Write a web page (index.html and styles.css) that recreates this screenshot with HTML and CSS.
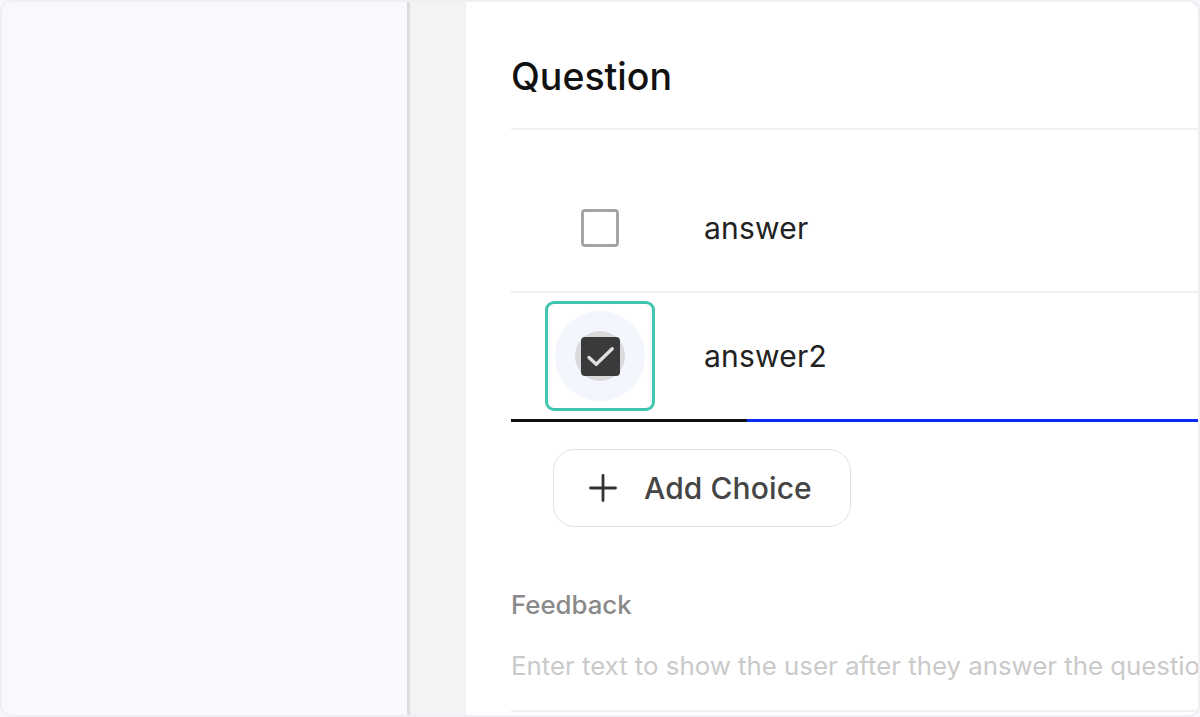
FILE: index.html
```html
<!DOCTYPE html>
<html lang="en">
<head>
<meta charset="utf-8">
<title>Question editor</title>
<link rel="stylesheet" href="styles.css">
</head>
<body>
<div class="frame">
  <aside class="sidebar"></aside>
  <div class="divider"></div>
  <div class="gutter"></div>
  <main class="card">
    <div class="card-inner">
      <h1 class="title">Question</h1>
      <div class="choices">
        <div class="choice">
          <div class="cell">
            <span class="box"></span>
          </div>
          <span class="label">answer</span>
        </div>
        <div class="choice last">
          <div class="cell focus">
            <span class="ripple">
              <span class="halo"></span>
              <span class="box checked">
                <svg viewBox="0 0 39 39" width="39" height="39"><path d="M8 20.5l7.2 6.8 16-15.5" fill="none" stroke="#dedee0" stroke-width="3.4" stroke-linecap="round" stroke-linejoin="round"/></svg>
              </span>
            </span>
          </div>
          <span class="label">answer2</span>
        </div>
        <div class="underline"><span class="ul-dark"></span><span class="ul-blue"></span></div>
      </div>
      <button class="add-btn" type="button">
        <svg class="plus" viewBox="0 0 28 28" width="28" height="28"><path d="M14 1.5v25M1.5 14h25" stroke="#333" stroke-width="2.8" stroke-linecap="round"/></svg>
        <span>Add Choice</span>
      </button>
      <div class="feedback">
        <div class="fb-label">Feedback</div>
        <div class="fb-input">Enter text to show the user after they answer the question</div>
      </div>
    </div>
  </main>
</div>
</body>
</html>
```

FILE: styles.css
```css
* { box-sizing: border-box; }
html, body { margin: 0; padding: 0; }
body {
  width: 1200px;
  height: 717px;
  overflow: hidden;
  background: #f7f7fa;
  font-family: "Inter", "Liberation Sans", sans-serif;
}
.frame {
  display: flex;
  width: 1200px;
  height: 717px;
  border: 2px solid #efeff4;
  border-radius: 12px;
  overflow: hidden;
  background: #ffffff;
}
.sidebar {
  width: 405px;
  flex: none;
  background: #f8f9fd;
}
.divider {
  width: 3px;
  flex: none;
  background: #dcdcdf;
}
.gutter {
  width: 55px;
  flex: none;
  background: #f3f3f3;
}
.card {
  flex: 1;
  min-width: 0;
  background: #ffffff;
  border-left: 1px solid #eeeef3;
  border-top-right-radius: 10px;
  overflow: hidden;
}
.card-inner {
  width: 1100px;
  padding-left: 45px;
}
.title {
  margin: 0;
  padding: 55px 0 31px;
  font-size: 37.5px;
  line-height: 40px;
  font-weight: 500;
  color: #111;
  border-bottom: 2px solid #f0f0f2;
}
.choices {
  padding-top: 35px;
}
.choice {
  display: flex;
  align-items: center;
  padding: 8px 0;
  border-bottom: 2px solid #efefef;
}
.choice.last {
  border-bottom: none;
}
.cell {
  width: 110px;
  height: 110px;
  margin-left: 34px;
  display: flex;
  align-items: center;
  justify-content: center;
  border: 3px solid transparent;
  border-radius: 9px;
  flex: none;
}
.cell.focus {
  border-color: #40c6ad;
}
.ripple {
  position: relative;
  width: 90px;
  height: 90px;
  border-radius: 50%;
  background: #f3f6fd;
  display: flex;
  align-items: center;
  justify-content: center;
}
.halo {
  position: absolute;
  left: 20px;
  top: 20px;
  width: 50px;
  height: 50px;
  border-radius: 50%;
  background: #dadadd;
}
.box {
  position: relative;
  width: 38px;
  height: 38px;
  border: 3px solid #a5a5a5;
  border-radius: 4px;
  background: #fff;
  display: flex;
  align-items: center;
  justify-content: center;
}
.box.checked {
  border: none;
  background: #3a3a3d;
  width: 39px;
  height: 39px;
}
.label {
  margin-left: 49px;
  font-size: 30px;
  color: #222;
  letter-spacing: 0.2px;
}
.underline {
  display: flex;
  height: 3px;
}
.ul-dark {
  width: 236px;
  background: #111;
}
.ul-blue {
  flex: 1;
  background: #0a2cf6;
}
.add-btn {
  display: flex;
  align-items: center;
  margin: 27px 0 0 42px;
  width: 298px;
  height: 78px;
  padding: 0 0 0 35px;
  border: 1.5px solid #e2e2e2;
  border-radius: 22px;
  background: #fff;
  font-family: inherit;
  font-size: 30px;
  font-weight: 500;
  color: #454545;
  letter-spacing: 0.1px;
  cursor: pointer;
}
.add-btn .plus {
  flex: none;
  margin-right: 27px;
}
.feedback {
  margin-top: 63px;
}
.fb-label {
  font-size: 25.8px;
  font-weight: 500;
  color: #8a8a8a;
  line-height: 30px;
}
.fb-input {
  margin-top: 31px;
  padding-bottom: 29px;
  font-size: 25.8px;
  line-height: 30px;
  color: #cacaca;
  white-space: nowrap;
  border-bottom: 2px solid #f0f0f2;
}
```
